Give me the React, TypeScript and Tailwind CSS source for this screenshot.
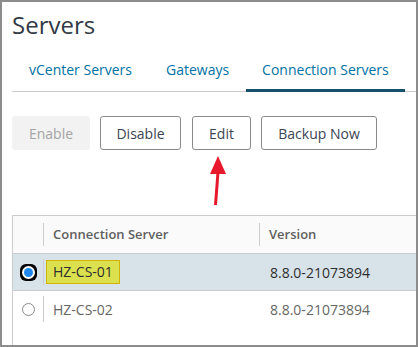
import React from "react";

const tabs = ["vCenter Servers", "Gateways", "Connection Servers"];

const rows = [
  { name: "HZ-CS-01", version: "8.8.0-21073894", selected: true },
  { name: "HZ-CS-02", version: "8.8.0-21073894", selected: false },
];

const App: React.FC = () => {
  return (
    <div
      className="relative w-[418px] h-[347px] overflow-hidden border-2 border-[#8c8c8c] bg-white pl-[10px] flex flex-col"
      style={{ fontFamily: '"Open Sans", Arial, sans-serif' }}
    >
      {/* Title */}
      <h1 className="mt-[7px] text-[24px] leading-[32px] text-[#313a46] font-normal">Servers</h1>

      {/* Tabs */}
      <div className="mt-[13px] flex border-b border-[#cccccc]">
        {tabs.map((t, i) => (
          <div
            key={t}
            className={
              i === 2
                ? "-mb-px px-[16px] pb-[9px] pt-[6px] text-[14px] leading-[20px] text-[#0072a3] border-b-[3px] border-[#17506a]"
                : "-mb-px px-[17px] pb-[9px] pt-[6px] text-[14px] leading-[20px] text-[#0072a3] border-b-[3px] border-transparent"
            }
          >
            {t}
          </div>
        ))}
      </div>

      {/* Action buttons */}
      <div className="mt-[24px] flex gap-[10px] text-[14px]">
        <button
          type="button"
          className="h-[34px] w-[78px] rounded-[3px] bg-[#f2f2f2] text-[#a4a4a4]"
        >
          Enable
        </button>
        <button
          type="button"
          className="h-[34px] w-[81px] rounded-[3px] border border-[#8a8a8a] text-[#3b4452]"
        >
          Disable
        </button>
        <button
          type="button"
          className="h-[34px] w-[59px] ml-px rounded-[3px] border border-[#8a8a8a] text-[#3b4452]"
        >
          Edit
        </button>
        <button
          type="button"
          className="h-[34px] w-[116px] rounded-[3px] border border-[#8a8a8a] text-[#3b4452]"
        >
          Backup Now
        </button>
      </div>

      {/* Red annotation arrow */}
      <svg
        className="absolute left-[204px] top-[150px]"
        width="24"
        height="58"
        viewBox="0 0 24 58"
      >
        <polygon points="12,4 4,22 20,22" fill="#e8192c" />
        <line x1="12" y1="20" x2="9.5" y2="53" stroke="#e8192c" strokeWidth="3" />
      </svg>

      {/* Table */}
      <div className="mt-[65px] flex-1 border-t border-l border-[#cccccc] text-[14px]">
        <div className="flex h-[38px] items-center bg-[#fafafa] border-b border-[#cccccc] text-[13px] font-semibold text-[#5f5f5f]">
          <div className="w-[31px] h-[23px] border-r border-[#cccccc]" />
          <div className="w-[216px] h-[23px] pl-[9px] leading-[23px] border-r border-[#cccccc]">
            Connection Server
          </div>
          <div className="pl-[9px] leading-[23px]">Version</div>
        </div>
        {rows.map((r) => (
          <div
            key={r.name}
            className={
              r.selected
                ? "flex h-[37px] items-center bg-[#d8e3e9] border-b border-[#cccccc] text-[#2e2e2e]"
                : "flex h-[36px] items-center text-[#666666]"
            }
          >
            <div className="w-[31px] h-[26px] flex items-center justify-center border-r border-[#cccccc]">
              {r.selected ? (
                <span className="w-[17px] h-[17px] rounded-[6px] bg-black flex items-center justify-center">
                  <span className="w-[13px] h-[13px] rounded-full bg-white flex items-center justify-center">
                    <span className="w-[9px] h-[9px] rounded-full bg-[#1e88ef]" />
                  </span>
                </span>
              ) : (
                <span className="w-[13px] h-[13px] rounded-full border border-[#8a8a8a] bg-white" />
              )}
            </div>
            <div className="w-[216px] pl-[2px]">
              {r.selected ? (
                <span className="inline-block px-[6px] h-[24px] leading-[22px] bg-[#dbe04f] border border-[#d2b300]">
                  {r.name}
                </span>
              ) : (
                <span className="pl-[7px]">{r.name}</span>
              )}
            </div>
            <div className="pl-[10px]">{r.version}</div>
          </div>
        ))}
      </div>
    </div>
  );
};

export default App;
